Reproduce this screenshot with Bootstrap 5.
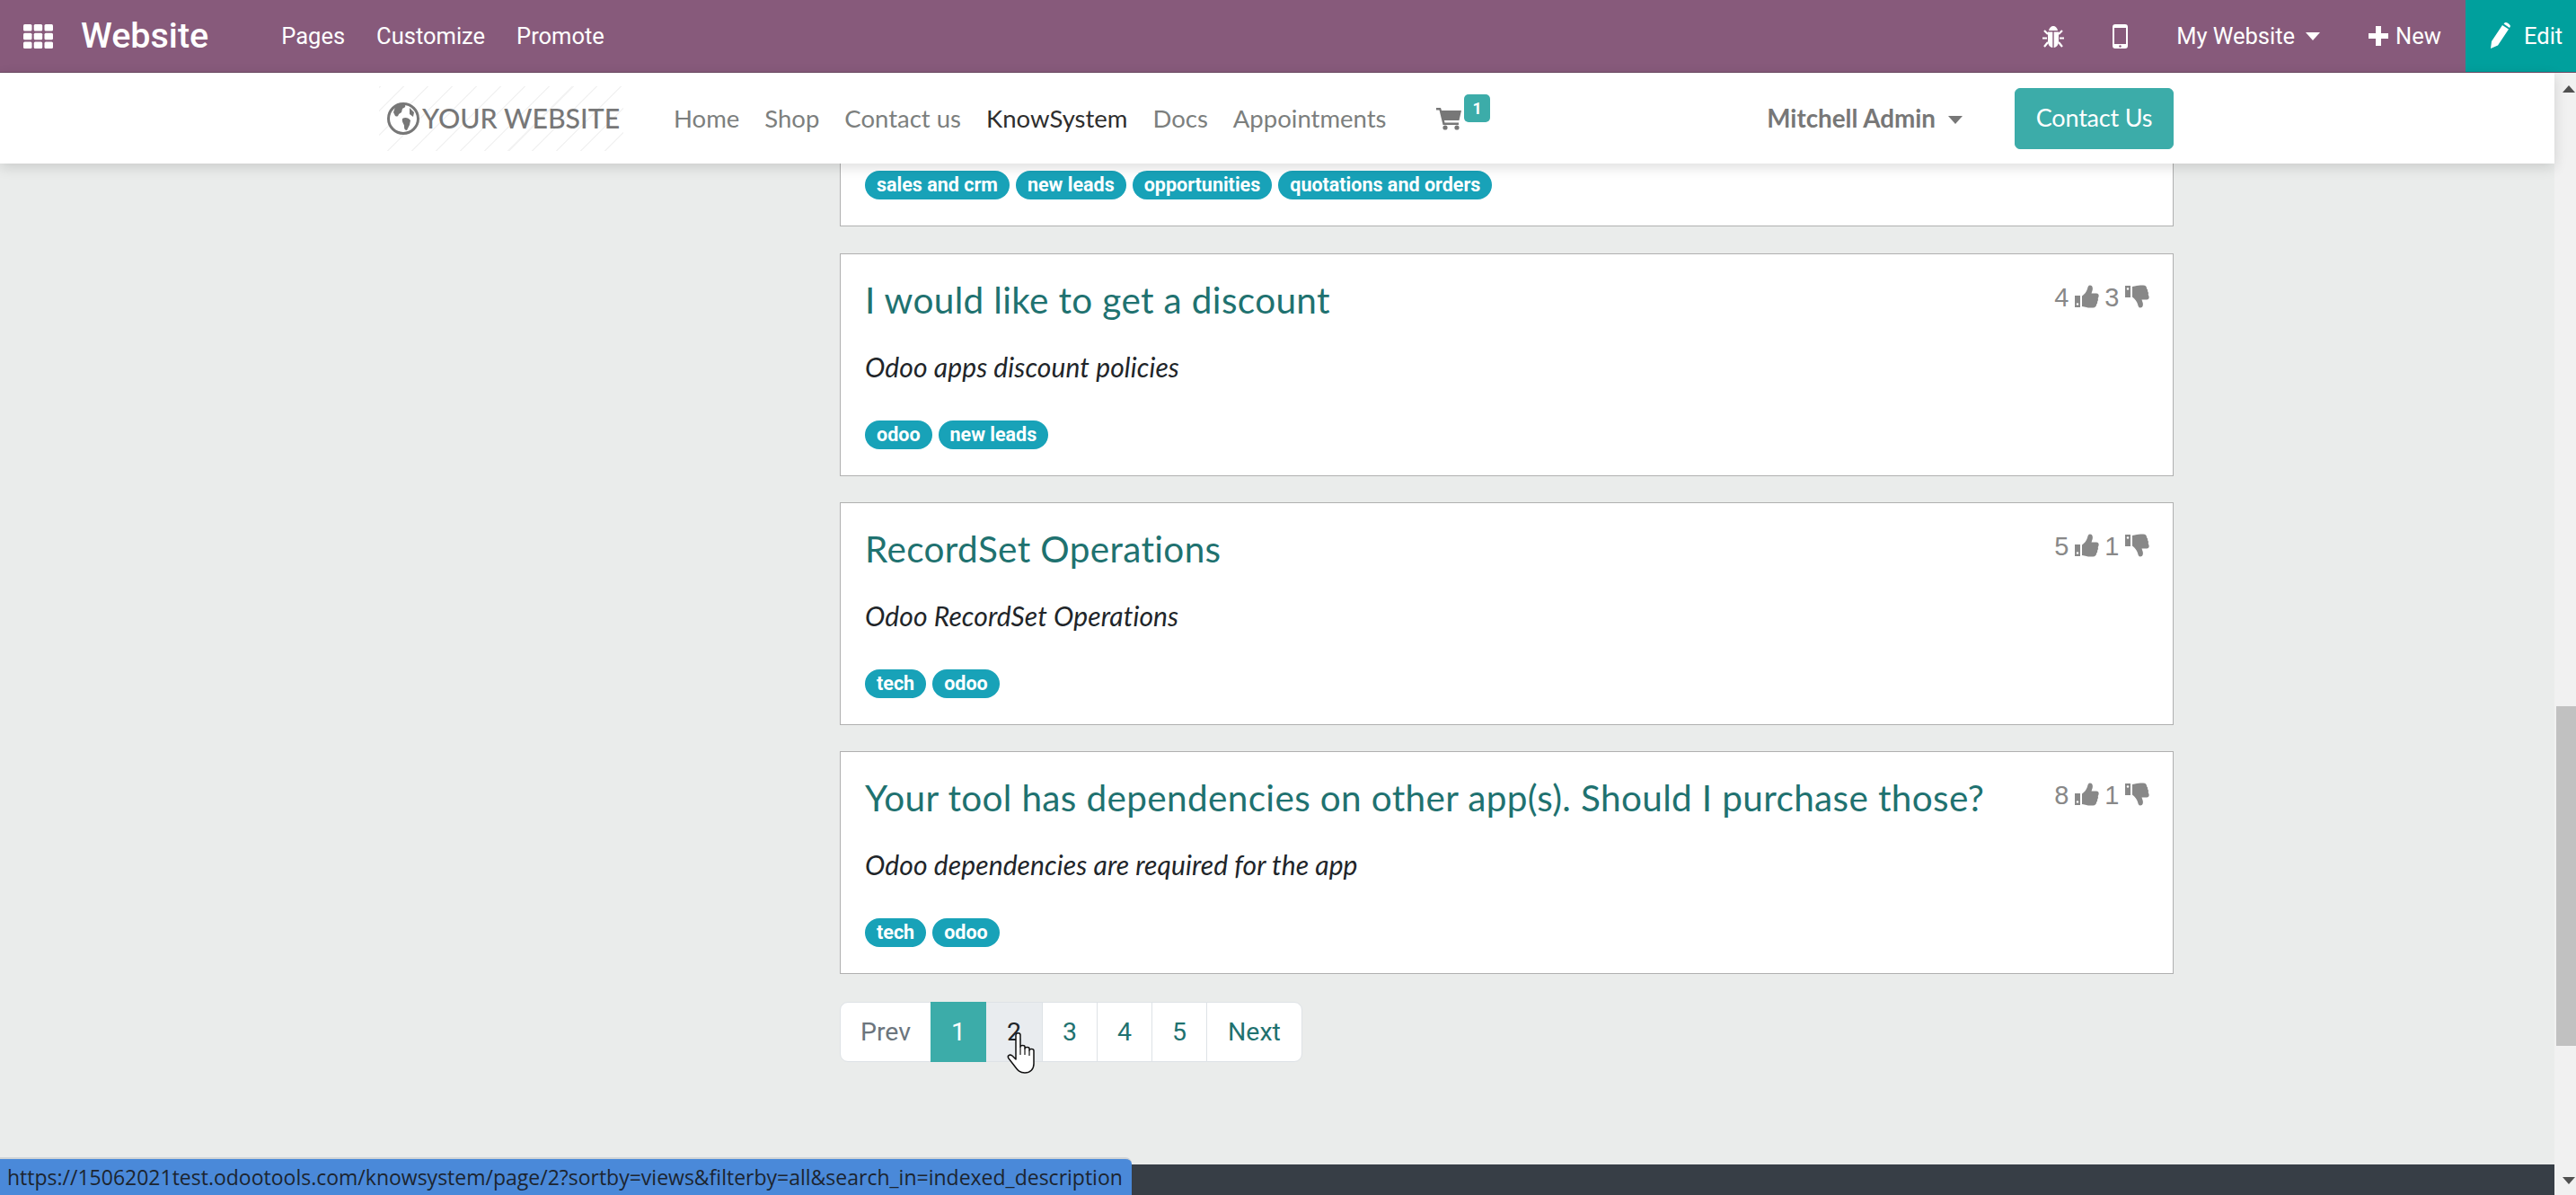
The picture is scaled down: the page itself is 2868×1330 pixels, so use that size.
<!doctype html>
<html lang="en">

<head>
    <meta charset="utf-8">
    <meta name="viewport" content="width=device-width, initial-scale=1">
    <title>KnowSystem</title>
    <link href="https://cdn.jsdelivr.net/npm/bootstrap@5.3.5/dist/css/bootstrap.min.css" rel="stylesheet">
    <style>
        html, body { height: 100%; }
        body { overflow: hidden; background: #eaeceb; font-family: "Lato", sans-serif; }

        /* odoo top bar */
        .editor-bar { height: 81px; background: #875a7b; border-bottom: 1px solid #6b4862; font-family: "Roboto", sans-serif; color: #fff; }
        .editor-bar a { color: #fff; text-decoration: none; font-size: 25.5px; }
        .apps-icon { width: 33px; height: 27px; margin-left: 26px; fill: #fff; }
        .editor-bar .app-name { font-size: 39.5px; font-weight: 500; margin-left: 31px; margin-right: 81px; }
        .menu-link { margin-right: 35px; }
        .caret-down { display: inline-block; border-top: 9px solid currentColor; border-left: 8px solid transparent; border-right: 8px solid transparent; margin-left: 12px; vertical-align: 4px; }
        .user-menu .caret-down { margin-left: 14px; }
        .bar-gap { margin-left: 54px; }
        .editor-bar .edit-btn { width: 123px; height: 80px; background: #00a09d; margin-left: 27px; padding-left: 27px; gap: 14px; }

        /* site header */
        .site-header { height: 101px; background: #fff; box-shadow: 0 4px 14px rgba(0, 0, 0, .14); position: relative; z-index: 2; }
        .page-wrap { width: 2028px; margin: 0 auto; padding: 0 16px; }
        .brand-logo { width: 272px; height: 72px; margin-left: -2px; padding-left: 9px; background: repeating-linear-gradient(135deg, #f3f3f3 0 1.5px, #fff 1.5px 19px); color: #777; font-size: 30.3px; text-decoration: none; gap: 3px; font-weight: 500; white-space: nowrap; }
        .site-links { margin-left: 42px; font-size: 27.5px; }
        .site-links .nav-link { color: #7c7f7e; padding: 0 14px; }
        .site-links .nav-link.on-page { color: #2e2e2e; }
        .cart-link { position: relative; margin-left: 42px; width: 60px; height: 40px; }
        .cart-badge { position: absolute; left: 31px; top: -7px; background: #3caca9; color: #fff; font: 700 18px "Roboto", sans-serif; padding: 5px 9px; border-radius: 5px; }
        .user-menu { color: #777; font-weight: 700; font-size: 27.8px; margin-right: 58px; text-decoration: none; }
        .contact-btn { background: #3caca9; border-color: #3caca9; color: #fff; font-size: 27px; letter-spacing: -.2px; width: 177px; height: 68px; border-radius: 6px; }

        /* results */
        .results-col { margin-left: 511px; }
        .result-card { border: 1px solid #b0b0b0; border-radius: 0; padding: 23px 27px 29px; margin-bottom: 29px; background: #fff; }
        .clipped-card { border-top: 0; padding: 8px 27px 29px; margin-bottom: 30px; }
        .result-title { color: #1f7270; font-size: 40.5px; letter-spacing: .35px; line-height: 56px; text-decoration: none; }
        .result-desc { color: #212529; font-style: italic; font-size: 30px; letter-spacing: .1px; line-height: 40px; margin: 26px 0 40px; }
        .tag-row { gap: 7px; }
        .tag-pill { background: #18a2b8; color: #fff; font: 700 21.5px/32px "Roboto", sans-serif; height: 32px; padding: 0 13px; border-radius: 16px; }
        .vote-box { color: #888; font: 29px/34px "Liberation Sans", sans-serif; gap: 6.5px; margin-top: 8px; margin-right: -1px; }
        .vote-box svg { width: 27px; height: 26px; fill: #888; margin-top: 3px; }

        .pager { margin-top: 31px; }
        .pager .page-link { font: 28.5px/39px "Roboto", sans-serif; color: #1f7270; padding: 13px 0; text-align: center; border-color: #dee2e6; width: 62px; }
        .pager .page-item .prev-link { color: #6c757d; width: 102px; border-radius: 9px 0 0 9px; }
        .pager .page-item .next-link { width: 107px; border-radius: 0 9px 9px 0; }
        .pager .page-item.active .page-link { background: #3caca9; border-color: #3caca9; color: #fff; }
        .pager .hover-link { background: #e9ecef; color: #212529; width: 64px; }

        .site-footer { height: 34px; background: #373e46; }

        /* window bits */
        .fake-scroll { width: 24px; background: #f1f1f1; position: relative; }
        .scroll-thumb { position: absolute; left: 2px; right: 0; top: 705px; height: 378px; background: #c1c1c1; }
        .scroll-up, .scroll-down { position: absolute; left: 9px; border-left: 7.5px solid transparent; border-right: 7.5px solid transparent; }
        .scroll-up { top: 14px; border-bottom: 8px solid #505050; }
        .scroll-down { bottom: 12px; border-top: 8px solid #505050; }
        .status-tip { position: absolute; left: 0; bottom: 0; width: 1260px; height: 42px; background: #4a89d9; border-top: 2px solid #cfd3d6; border-top-right-radius: 7px; color: #1c2530; font: 23px/40px "Open Sans", sans-serif; padding-left: 8px; z-index: 3; white-space: nowrap; }
        .hand-cursor { position: absolute; left: 1120px; top: 1148px; width: 40px; height: 48px; z-index: 4; }
    </style>
</head>

<body>
    <svg width="0" height="0" class="d-block">
        <symbol id="thumb" viewBox="0 0 27 26">
            <path d="M0 12h6v13H0z"/>
            <path d="M8 12.5c3-2 5-5 6-8 .5-2 1-4 3-4 2.500 0 3.500 3 2.500 6l-1 3h5.500c2 0 3 1.500 2.600 3.200-.3 1.500-.6 1.800-.9 2.300.5 1.500.3 2.700-.6 3.700.2 1.300-.1 2.300-1 3.100 0 2-1.300 3.700-4 3.700h-3c-3 0-5-1-9.100-1.600z"/>
            <circle cx="3" cy="21.500" r="1.200" fill="#fff"/>
        </symbol>
    </svg>

    <div class="editor-bar d-flex align-items-center">
        <svg class="apps-icon" viewBox="0 0 33 27">
            <rect x="0" y="0" width="9.500" height="7.500" rx="1.500"/><rect x="11.700" y="0" width="9.500" height="7.500" rx="1.500"/><rect x="23.500" y="0" width="9.500" height="7.500" rx="1.500"/>
            <rect x="0" y="9.700" width="9.500" height="7.500" rx="1.500"/><rect x="11.700" y="9.700" width="9.500" height="7.500" rx="1.500"/><rect x="23.500" y="9.700" width="9.500" height="7.500" rx="1.500"/>
            <rect x="0" y="19.500" width="9.500" height="7.500" rx="1.500"/><rect x="11.700" y="19.500" width="9.500" height="7.500" rx="1.500"/><rect x="23.500" y="19.500" width="9.500" height="7.500" rx="1.500"/>
        </svg>
        <a href="#" class="app-name">Website</a>
        <a href="#" class="menu-link">Pages</a>
        <a href="#" class="menu-link">Customize</a>
        <a href="#" class="menu-link">Promote</a>

        <div class="ms-auto d-flex align-items-center">
            <svg width="24" height="27" viewBox="0 0 24 27" fill="#fff">
                <path d="M7 7c.5-3 2.500-5 5-5s4.500 2 5 5z"/>
                <path d="M6 8.500h5.300V26C8 25.500 6 22.500 6 19zM12.700 8.500H18V19c0 3.500-2 6.500-5.300 7z"/>
                <path d="M6 11 2 7M18 11l4-4M5 15.500H0M19 15.500h5M6 20l-4 5M18 20l4 5" stroke="#fff" stroke-width="2.200" fill="none"/>
            </svg>
            <svg width="17" height="27" viewBox="0 0 17 27" class="bar-gap">
                <path fill="#fff" fill-rule="evenodd" d="M3 0h11a3 3 0 0 1 3 3v21a3 3 0 0 1-3 3H3a3 3 0 0 1-3-3V3a3 3 0 0 1 3-3zM2 4v18h13V4z"/>
                <circle cx="8.500" cy="24.500" r="1.200" fill="#875a7b"/>
            </svg>
            <a href="#" class="bar-gap">My Website<span class="caret-down"></span></a>
            <a href="#" class="bar-gap d-flex align-items-center">
                <svg width="22" height="22" viewBox="0 0 22 22" fill="#fff"><path d="M8 0h6v8h8v6h-8v8H8v-8H0V8h8z"/></svg>
                <span class="ms-2">New</span>
            </a>
            <a href="#" class="edit-btn d-flex align-items-center">
                <svg width="24" height="30" viewBox="0 0 24 30" fill="#fff"><path d="M1 29l1-8L14 3l7 4.500L9 25.500zM15.500 1.500 17 0c2-.5 5.500 2 6 4l-1 2z"/></svg>
                Edit
            </a>
        </div>
    </div>

    <div class="d-flex" style="height: calc(100vh - 81px)">
        <div class="flex-grow-1 d-flex flex-column">
            <header class="site-header">
                <div class="page-wrap h-100 d-flex align-items-center">
                    <a href="#" class="brand-logo d-flex align-items-center">
                        <svg width="36" height="36" viewBox="0 0 36 36" class="flex-shrink-0">
                            <circle cx="18" cy="18" r="16.500" fill="#fff" stroke="#777" stroke-width="3"/>
                            <path fill="#777" d="M9 5c3-2 7-3 11-2 1 2-1 3-3 4l-1 4-3 2c-1 3-2 3-4 2l-2-4zM17 18c3-2 7-1 9 2l-1 5-3 6c-3 0-3-3-3-5s-3-4-2-8zM25 6l5 5-1 5-4-3z"/>
                        </svg>
                        YOUR WEBSITE
                    </a>
                    <nav class="nav site-links align-items-center">
                        <a class="nav-link" href="#">Home</a>
                        <a class="nav-link" href="#">Shop</a>
                        <a class="nav-link" href="#">Contact us</a>
                        <a class="nav-link on-page" href="#">KnowSystem</a>
                        <a class="nav-link" href="#">Docs</a>
                        <a class="nav-link" href="#">Appointments</a>
                    </nav>
                    <a href="#" class="cart-link d-flex align-items-center">
                        <svg width="28" height="26" viewBox="0 0 28 26" fill="#777"><path d="M0 1h5l1 3h22l-2.500 11H9l.5 2.500H25V20H7.500L3.500 3.500H0z"/><circle cx="10" cy="23" r="2.600"/><circle cx="23" cy="23" r="2.600"/></svg>
                        <span class="cart-badge">1</span>
                    </a>
                    <a href="#" class="user-menu ms-auto">Mitchell Admin<span class="caret-down"></span></a>
                    <a href="#" class="btn contact-btn d-flex align-items-center justify-content-center">Contact Us</a>
                </div>
            </header>

            <main class="flex-grow-1 overflow-hidden">
                <div class="page-wrap">
                    <div class="results-col">
                        <div class="card result-card clipped-card">
                            <div class="d-flex tag-row">
                                <span class="tag-pill">sales and crm</span>
                                <span class="tag-pill">new leads</span>
                                <span class="tag-pill">opportunities</span>
                                <span class="tag-pill">quotations and orders</span>
                            </div>
                        </div>
                        <div class="card result-card">
                            <div class="d-flex justify-content-between">
                                <a href="#" class="result-title">I would like to get a discount</a>
                                <div class="vote-box d-flex align-items-start">4 <svg><use href="#thumb"/></svg> 3 <svg style="transform:scaleY(-1)"><use href="#thumb"/></svg></div>
                            </div>
                            <div class="result-desc">Odoo apps discount policies</div>
                            <div class="d-flex tag-row">
                                <span class="tag-pill">odoo</span>
                                <span class="tag-pill">new leads</span>
                            </div>
                        </div>
                        <div class="card result-card">
                            <div class="d-flex justify-content-between">
                                <a href="#" class="result-title">RecordSet Operations</a>
                                <div class="vote-box d-flex align-items-start">5 <svg><use href="#thumb"/></svg> 1 <svg style="transform:scaleY(-1)"><use href="#thumb"/></svg></div>
                            </div>
                            <div class="result-desc">Odoo RecordSet Operations</div>
                            <div class="d-flex tag-row">
                                <span class="tag-pill">tech</span>
                                <span class="tag-pill">odoo</span>
                            </div>
                        </div>
                        <div class="card result-card">
                            <div class="d-flex justify-content-between">
                                <a href="#" class="result-title">Your tool has dependencies on other app(s). Should I purchase those?</a>
                                <div class="vote-box d-flex align-items-start">8 <svg><use href="#thumb"/></svg> 1 <svg style="transform:scaleY(-1)"><use href="#thumb"/></svg></div>
                            </div>
                            <div class="result-desc">Odoo dependencies are required for the app</div>
                            <div class="d-flex tag-row">
                                <span class="tag-pill">tech</span>
                                <span class="tag-pill">odoo</span>
                            </div>
                        </div>
                        <ul class="pagination pager">
                            <li class="page-item"><a class="page-link prev-link" href="#">Prev</a></li>
                            <li class="page-item active"><a class="page-link" href="#">1</a></li>
                            <li class="page-item"><a class="page-link hover-link" href="#">2</a></li>
                            <li class="page-item"><a class="page-link" href="#">3</a></li>
                            <li class="page-item"><a class="page-link" href="#">4</a></li>
                            <li class="page-item"><a class="page-link" href="#">5</a></li>
                            <li class="page-item"><a class="page-link next-link" href="#">Next</a></li>
                        </ul>
                    </div>
                </div>
            </main>
            <footer class="site-footer"></footer>
        </div>

        <div class="fake-scroll">
            <span class="scroll-up"></span>
            <span class="scroll-thumb"></span>
            <span class="scroll-down"></span>
        </div>
    </div>

    <div class="status-tip">https://15062021test.odootools.com/knowsystem/page/2?sortby=views&amp;filterby=all&amp;search_in=indexed_description</div>

    <svg class="hand-cursor" viewBox="0 0 40 48">
        <path fill="#fff" stroke="#111" stroke-width="1.500" stroke-linejoin="round" d="M11 4c0-3 5-3 5 0v13c0-2 5-2 5 0v2c0-2 5-2 5 0v2c0-2 5-2 5 .5V36c0 6-4 10-10 10-6 0-8-3-11-7L3 30c-2-3 1-5 4-3l4 4z"/>
        <path stroke="#111" stroke-width="1.200" d="M16 17v9M21 19v7M26 21v6"/>
    </svg>

    <script src="https://cdn.jsdelivr.net/npm/bootstrap@5.3.5/dist/js/bootstrap.bundle.min.js"></script>
</body>

</html>
